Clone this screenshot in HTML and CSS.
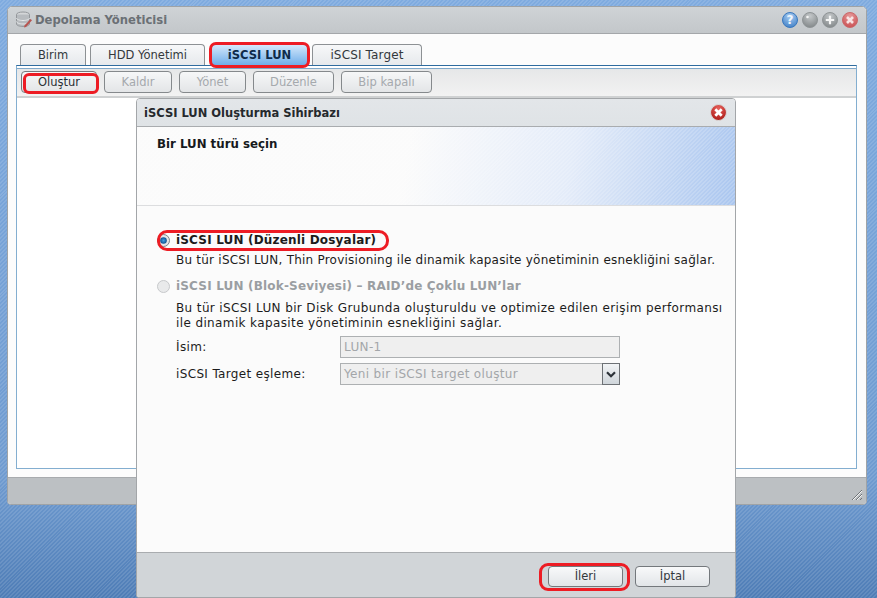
FILE: index.html
```html
<!DOCTYPE html>
<html lang="tr">
<head>
<meta charset="utf-8">
<title>Depolama Yöneticisi</title>
<link rel="stylesheet" href="styles.css">
</head>
<body>
<svg class="defs" width="0" height="0">
  <defs>
    <radialGradient id="gBlue" cx="50%" cy="25%" r="80%"><stop offset="0" stop-color="#a9cdf2"/><stop offset="1" stop-color="#3f7fc6"/></radialGradient>
    <radialGradient id="gGray" cx="50%" cy="25%" r="80%"><stop offset="0" stop-color="#c4c8ca"/><stop offset="1" stop-color="#7f8486"/></radialGradient>
    <radialGradient id="gPale" cx="50%" cy="25%" r="80%"><stop offset="0" stop-color="#e69a9a"/><stop offset="1" stop-color="#c84d50"/></radialGradient>
    <radialGradient id="gRed" cx="50%" cy="25%" r="80%"><stop offset="0" stop-color="#e8615d"/><stop offset="1" stop-color="#a81712"/></radialGradient>
    <radialGradient id="gRadio" cx="50%" cy="50%" r="50%"><stop offset="0" stop-color="#3f9fe0"/><stop offset="1" stop-color="#0f4f90"/></radialGradient>
  </defs>
</svg>
<section class="window">
  <header class="titlebar">
    <svg class="appicon" width="18" height="18" viewBox="0 0 18 18">
      <ellipse cx="8" cy="3.500" rx="6.500" ry="2.500" fill="#d6d8da" stroke="#8b8f93"/>
      <path d="M1.500 3.500v9.500c0 1.400 3 2.500 6.500 2.500s6.500-1.100 6.500-2.500V3.500" fill="#b4b8bc" stroke="#8b8f93"/>
      <path d="M1.500 7c0 1.400 3 2.500 6.500 2.500S14.500 8.400 14.500 7M1.500 10.500c0 1.400 3 2.500 6.500 2.500s6.500-1.100 6.500-2.500" fill="none" stroke="#eef0f1"/>
      <path d="M9.500 14.500l6-6.500 1.500 1.300-6 6.700-2 .5z" fill="#b5403a"/>
    </svg>
    <h1 class="apptitle">Depolama Yöneticisi</h1>
    <div class="winbtns">
      <svg class="wbtn" viewBox="0 0 16 16"><circle cx="8" cy="8" r="7.500" fill="url(#gBlue)" stroke="#3a78bd" stroke-width="1"/><text x="8" y="12" class="qmark">?</text></svg>
      <svg class="wbtn" viewBox="0 0 16 16"><circle cx="8" cy="8" r="7.500" fill="url(#gGray)" stroke="#8f9496"/><circle cx="5.500" cy="5" r="1.300" fill="#f2f3f3"/></svg>
      <svg class="wbtn" viewBox="0 0 16 16"><circle cx="8" cy="8" r="7.500" fill="url(#gGray)" stroke="#8f9496"/><path d="M8 3.800v8.400M3.800 8h8.400" stroke="#f4f5f5" stroke-width="2.200"/></svg>
      <svg class="wbtn" viewBox="0 0 16 16"><circle cx="8" cy="8" r="7.500" fill="url(#gPale)" stroke="#c9696b"/><path d="M5 5l6 6M11 5l-6 6" stroke="#f7e4e4" stroke-width="2.600"/></svg>
    </div>
  </header>
  <div class="winbody">
    <nav class="tabs">
      <span class="tab tab-birim">Birim</span>
      <span class="tab tab-hdd">HDD Yönetimi</span>
      <span class="tab tab-active mark">iSCSI LUN</span>
      <span class="tab tab-target">iSCSI Target</span>
    </nav>
    <div class="panel">
      <div class="toolbar">
        <span class="tbtn w-olustur mark">Oluştur</span>
        <span class="tbtn off w-kaldir">Kaldır</span>
        <span class="tbtn off w-yonet">Yönet</span>
        <span class="tbtn off w-duzenle">Düzenle</span>
        <span class="tbtn off w-bip">Bip kapalı</span>
      </div>
      <div class="panelcontent"></div>
    </div>
  </div>
  <footer class="winfoot">
    <svg class="grip" width="12" height="12" viewBox="0 0 12 12"><path d="M1 11L11 1M5 11l6-6M9 11l2-2" stroke="#6f7478" stroke-width="1"/><path d="M2 11L11 2M6 11l5-5" stroke="#f4f4f4" stroke-width="1"/></svg>
  </footer>
</section>

<section class="dialog">
  <header class="dlgtitle">
    <h2 class="dlgname">iSCSI LUN Oluşturma Sihirbazı</h2>
    <svg class="dlgclose" viewBox="0 0 16 16"><circle cx="8" cy="8" r="7.500" fill="url(#gRed)" stroke="#d9d9d9"/><path d="M5 5l6 6M11 5l-6 6" stroke="#fff" stroke-width="2.600"/></svg>
  </header>
  <div class="dlghead"><h3 class="dlgstep">Bir LUN türü seçin</h3></div>
  <div class="dlgbody">
    <div class="opt opt-first">
      <span class="mark marklabel">
        <svg class="radio" viewBox="0 0 13 13"><circle cx="6.500" cy="6.500" r="6" fill="#e4e6e8" stroke="#7d8287"/><circle cx="6.500" cy="6.500" r="3.300" fill="url(#gRadio)"/></svg>
        <span class="optlabel">iSCSI LUN (Düzenli Dosyalar)</span>
      </span>
    </div>
    <p class="desc">Bu tür iSCSI LUN, Thin Provisioning ile dinamik kapasite yönetiminin esnekliğini sağlar.</p>
    <div class="opt opt-second">
      <svg class="radio" viewBox="0 0 13 13"><circle cx="6.500" cy="6.500" r="6" fill="#e9eaeb" stroke="#c6c8ca"/></svg>
      <span class="optlabel disabled">iSCSI LUN (Blok-Seviyesi) – RAID’de Çoklu LUN’lar</span>
    </div>
    <p class="desc desc-two">Bu tür iSCSI LUN bir Disk Grubunda oluşturuldu ve optimize edilen erişim performansı<br>ile dinamik kapasite yönetiminin esnekliğini sağlar.</p>
    <div class="field field-first">
      <span class="flabel">İsim:</span>
      <span class="finput">LUN-1</span>
    </div>
    <div class="field">
      <span class="flabel">iSCSI Target eşleme:</span>
      <span class="finput fselect">Yeni bir iSCSI target oluştur
        <span class="selbtn"><svg width="10" height="7" viewBox="0 0 10 7"><path d="M1 1.200l4 4 4-4" fill="none" stroke="#2c3238" stroke-width="2.200"/></svg></span>
      </span>
    </div>
  </div>
  <footer class="dlgfoot">
    <span class="dbtn mark">İleri</span>
    <span class="dbtn">İptal</span>
  </footer>
</section>
</body>
</html>
```
FILE: styles.css
```css
* { box-sizing: border-box; }
html, body { margin: 0; height: 100%; }
body {
  position: relative;
  width: 877px;
  height: 598px;
  overflow: hidden;
  font-family: "DejaVu Sans", Verdana, sans-serif;
  font-size: 11.5px;
  color: #1c1c1c;
  background:
    repeating-linear-gradient(135deg, rgba(255,255,255,.11) 0 1.4px, rgba(0,0,0,0) 1.4px 2.8px),
    linear-gradient(180deg, #7fabdf 0%, #6f9bd0 80%, #4f7db6 100%);
}
h1, h2, h3, p { margin: 0; font: inherit; }
.defs { position: absolute; }

.window {
  position: absolute;
  left: 7px;
  top: 6px;
  width: 860px;
  height: 499px;
  display: flex;
  flex-direction: column;
  border: 1px solid #9fa3a6;
  border-radius: 5px 5px 4px 4px;
  overflow: hidden;
  background: #fcfcfc;
}
.titlebar {
  height: 27px;
  flex: none;
  display: flex;
  align-items: center;
  padding: 0 7px;
  background: linear-gradient(180deg, #cfd3d6, #c3c7ca);
  border-bottom: 1px solid #a4a7aa;
}
.appicon { margin-right: 2px; opacity: .85; }
.apptitle { font-weight: 700; font-size: 11.6px; color: #6b7075; flex: 1; }
.winbtns { display: flex; gap: 4px; margin-right: 1px; }
.wbtn { width: 16px; height: 16px; }
.qmark { font: 700 12px "DejaVu Sans", sans-serif; fill: #f1f6fc; text-anchor: middle; }

.winbody { flex: 1; display: flex; flex-direction: column; padding: 9px 9px 8px 8px; min-height: 0; }
.tabs { display: flex; height: 22px; padding-left: 4px; flex: none; }
.tab {
  display: flex; align-items: center; justify-content: center;
  height: 21px;
  margin-top: 1px;
  border: 1px solid #8d9194;
  border-bottom: 0;
  border-radius: 4px 4px 0 0;
  background: linear-gradient(180deg, #f7f8f9, #e6e9ec);
  color: #33383c;
}
.tab-birim { width: 66px; margin-right: 4px; }
.tab-hdd { width: 115px; margin-right: 6px; }
.tab-active {
  width: 97px; margin-right: 4px;
  font-weight: 700; color: #0e2b4a;
  border-color: #5a8cbf;
  background: linear-gradient(180deg, #d4e8fb, #6fade9);
}
.tab-target { width: 110px; font-size: 12px; letter-spacing: .15px; }

.panel {
  flex: 1; min-height: 0;
  display: flex; flex-direction: column;
  border: 1px solid #83aed0;
  border-top: 1px solid #2f6c9f;
  background: #fff;
  padding-top: 2px;
}
.toolbar {
  height: 30px; flex: none;
  display: flex; align-items: center;
  padding: 0 0 2px 4px;
  gap: 7px;
  border-top: 1px solid #7fa8c9;
  border-bottom: 2px solid #cfd1d2;
  background: linear-gradient(180deg, #e6e7e8, #f2f2f2);
}
.tbtn {
  height: 22px;
  display: flex; align-items: center; justify-content: center;
  border: 1px solid #74787c;
  border-radius: 4px;
  background: linear-gradient(180deg, #f6f7f8, #e3e5e7);
  color: #2b3035;
}
.tbtn.off { color: #a5a9ad; border-color: #85898c; }
.w-olustur { width: 76px; }
.w-kaldir { width: 68px; }
.w-yonet { width: 67px; }
.w-duzenle { width: 81px; }
.w-bip { width: 91px; }
.panelcontent { flex: 1; background: #fff; }

.winfoot {
  height: 27px; flex: none;
  position: relative;
  background: #bcc0c3;
  border-top: 1px solid #a8abae;
}
.grip { position: absolute; right: 3px; bottom: 3px; }

.dialog {
  position: absolute;
  left: 136px;
  top: 98px;
  width: 600px;
  height: 500px;
  display: flex; flex-direction: column;
  border: 1px solid #a3a6a9;
  border-radius: 4px 4px 3px 3px;
  background: #fbfbfb;
  overflow: hidden;
}
.dlgtitle {
  height: 28px; flex: none;
  display: flex; align-items: center; justify-content: space-between;
  padding: 0 8px 0 7px;
  background: linear-gradient(180deg, #e3e6e9, #dfe3e6);
  border-bottom: 1px solid #a9acaf;
}
.dlgname { font-weight: 700; font-size: 11.5px; color: #25292d; }
.dlgclose { width: 17px; height: 17px; }
.dlghead {
  height: 79px; flex: none;
  padding: 10px 20px 0;
  border-bottom: 1px solid #dcdddf;
  background:
    repeating-linear-gradient(135deg, rgba(255,255,255,.16) 0 1.4px, rgba(255,255,255,0) 1.4px 2.8px),
    linear-gradient(100deg, #fbfbfb 45%, #e4ecf9 72%, #aac6ef 100%);
}
.dlgstep { font-weight: 700; font-size: 11.8px; color: #16191c; }
.dlgbody { flex: 1; min-height: 0; padding: 0 20px; font-size: 12px; letter-spacing: .35px; }
.opt { display: flex; align-items: center; height: 16px; }
.opt-first { margin-top: 26px; }
.opt-second { margin-top: 10px; }
.marklabel { display: flex; align-items: center; }
.radio { width: 13px; height: 13px; margin-right: 6px; flex: none; }
.optlabel { font-weight: 700; letter-spacing: .18px; }
.optlabel.disabled { color: #9a9ea2; }
.desc { margin: 5px 0 0 19px; line-height: 15px; white-space: nowrap; letter-spacing: .23px; }
.desc-two { margin-top: 7px; letter-spacing: .38px; }
.field { display: flex; align-items: center; height: 22px; margin: 5px 0 0 19px; }
.field-first { margin-top: 5px; }
.flabel { width: 164px; flex: none; }
.finput {
  width: 280px; height: 22px;
  display: flex; align-items: center;
  position: relative;
  padding-left: 3px;
  border: 1px solid #adb0b2;
  background: #efefef;
  color: #a3a6a9;
}
.selbtn {
  position: absolute; right: -1px; top: -1px;
  width: 18px; height: 22px;
  display: flex; align-items: center; justify-content: center;
  border: 1px solid #6d7175;
  background: linear-gradient(180deg, #f2f4f6, #cfd5da);
}
.dlgfoot {
  height: 45px; flex: none;
  display: flex; align-items: center; justify-content: flex-end;
  gap: 12px;
  padding: 2px 25px 0 0;
  background: #d1d5d8;
  border-top: 1px solid #a9acaf;
}
.dbtn {
  width: 75px; height: 21px;
  display: flex; align-items: center; justify-content: center;
  border: 1px solid #74787c;
  border-radius: 4px;
  background: linear-gradient(180deg, #f8f9fa, #e2e5e8);
  color: #33383c;
}

.mark { position: relative; }
.mark::after {
  content: "";
  position: absolute;
  inset: -3px;
  border: 3px solid #ed1c24;
  border-radius: 7px;
}
.marklabel::after { inset: -3px -13px -4px 0; border-radius: 10px; }
.dbtn.mark::after { inset: -4px -8px -5px -10px; border-radius: 9px; }
.w-olustur::after { inset: 1px -3px -2px 1px; border-radius: 6px; }
```
